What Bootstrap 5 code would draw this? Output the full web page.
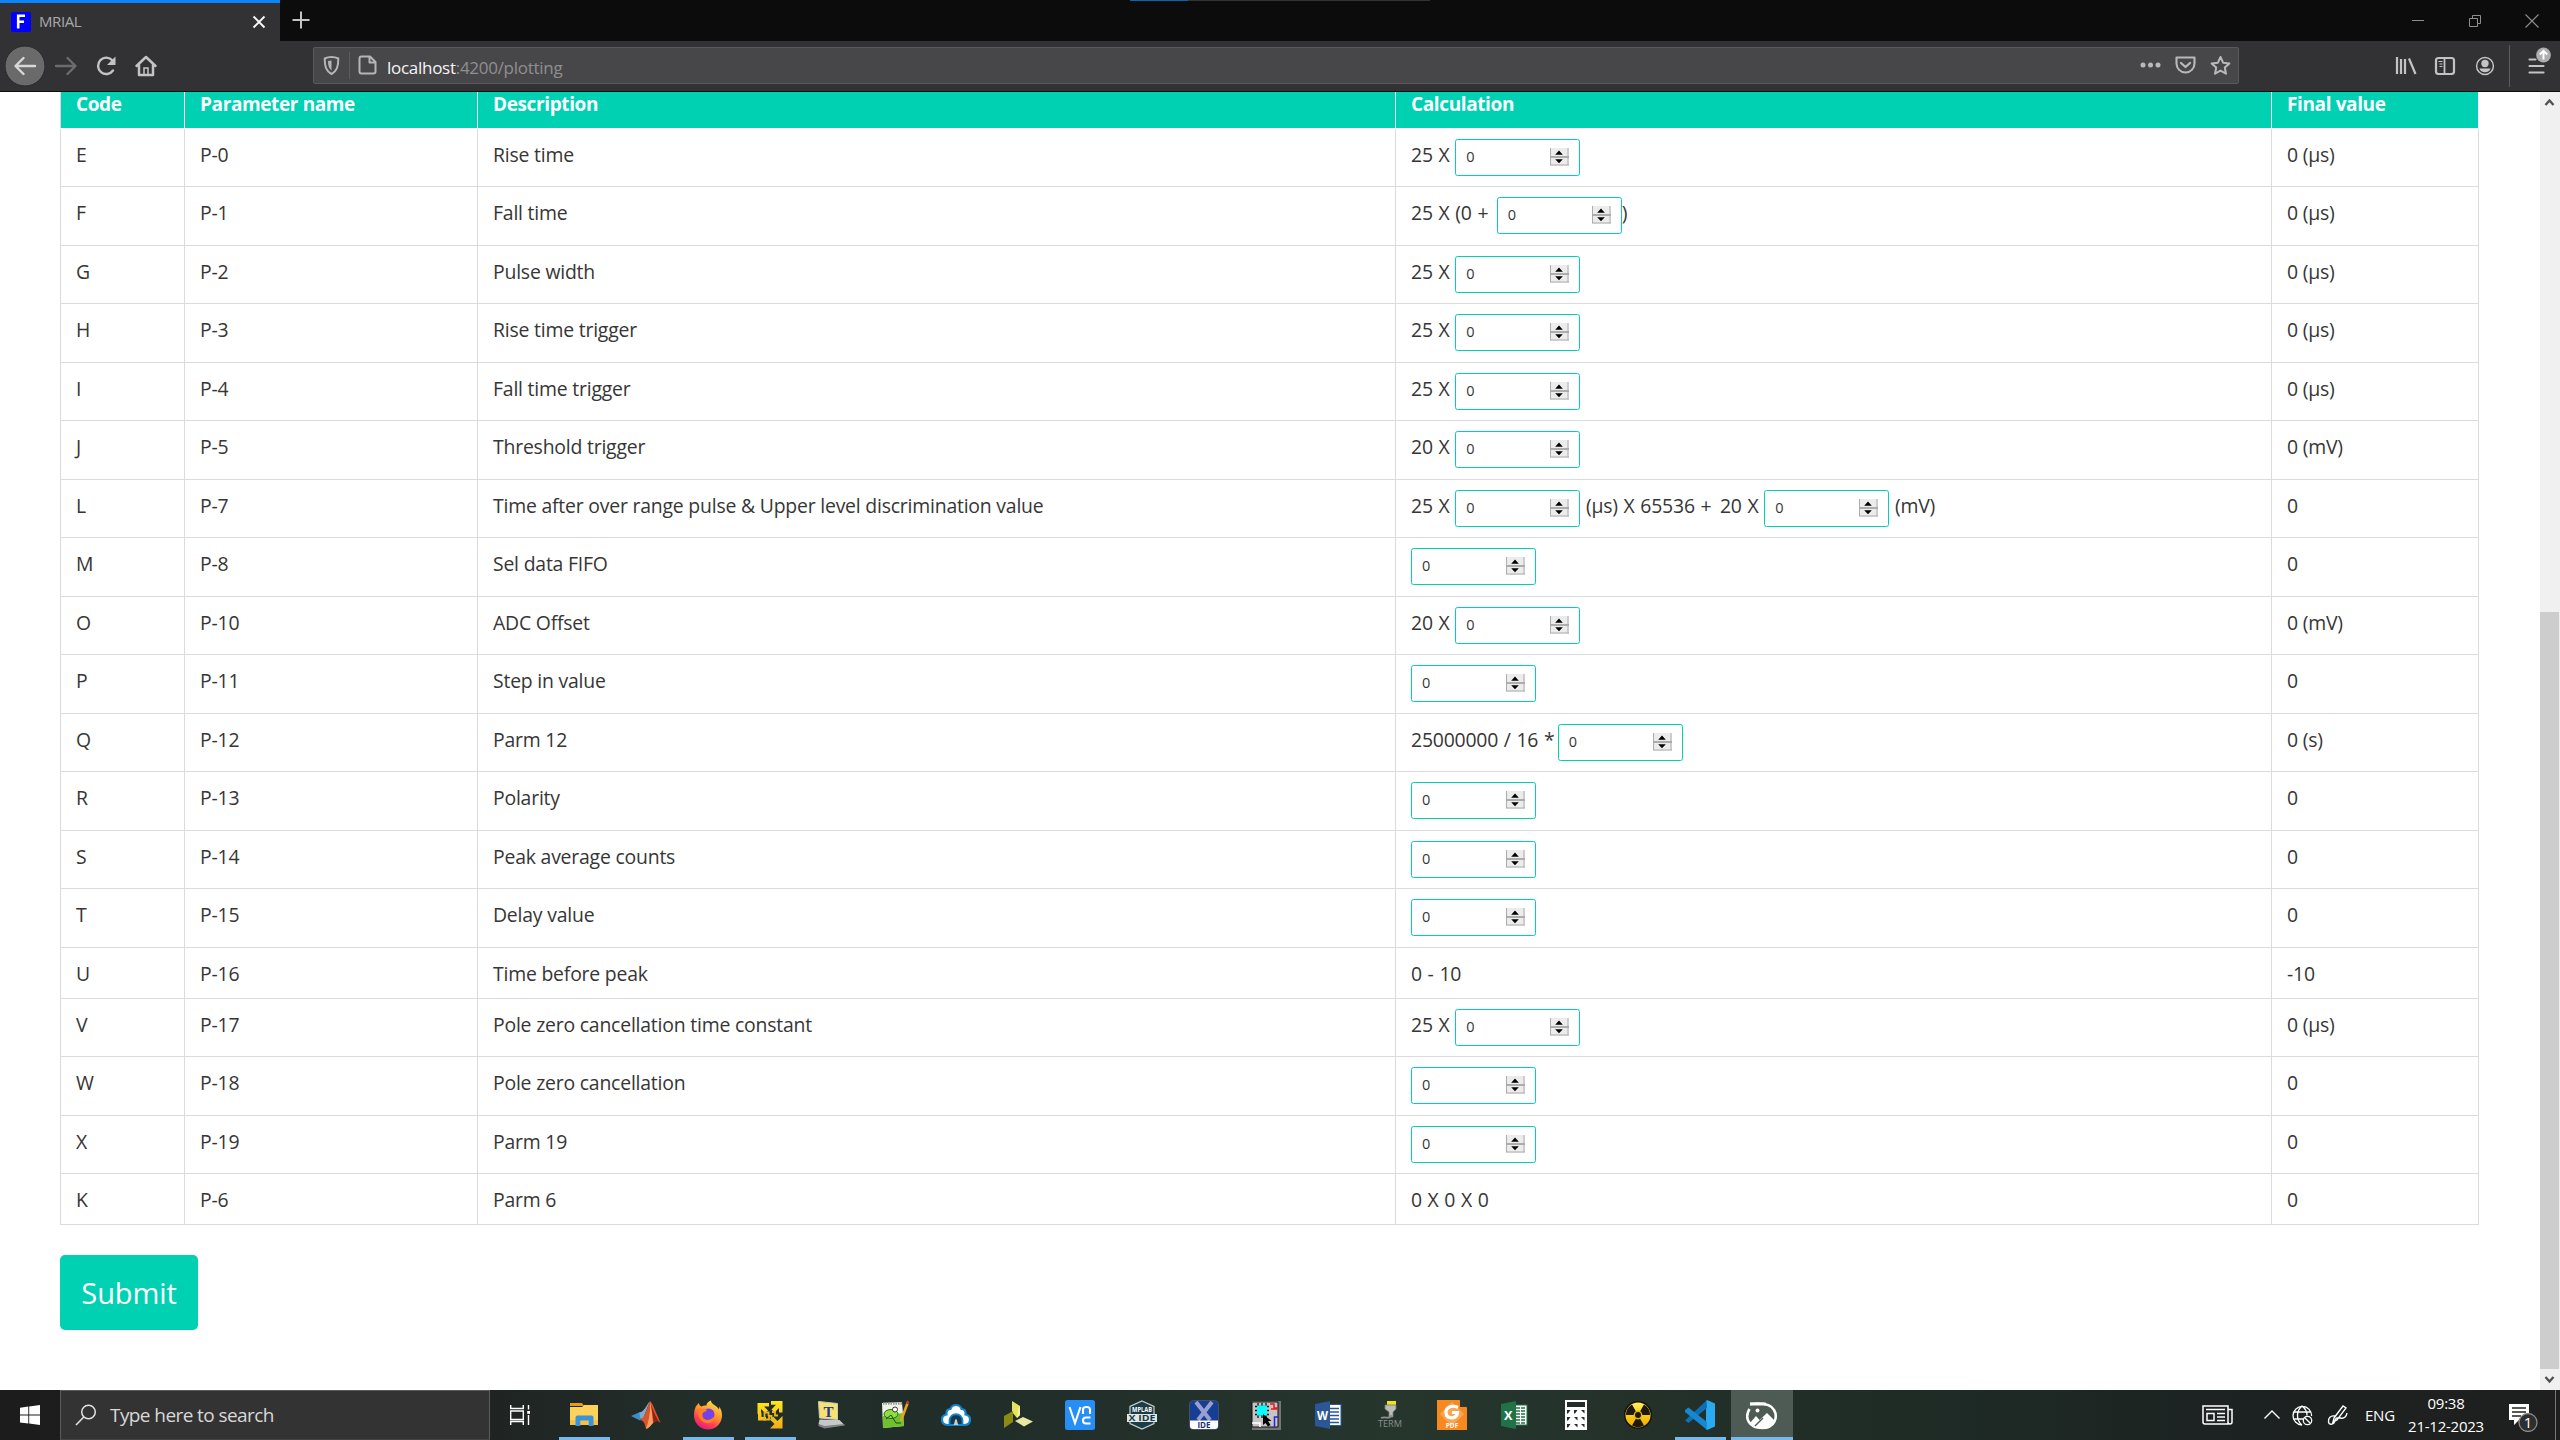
<!DOCTYPE html>
<html lang="en">
<head>
<meta charset="utf-8">
<title>MRIAL</title>
<link href="https://cdn.jsdelivr.net/npm/bootstrap@5.3.0/dist/css/bootstrap.min.css" rel="stylesheet">
<script src="https://cdn.jsdelivr.net/npm/bootstrap@5.3.0/dist/js/bootstrap.bundle.min.js"></script>
<style>
html,body{height:100%;overflow:hidden}
body{font-family:"Open Sans","Noto Sans",sans-serif;color:#363636;background:#fff}
svg{display:block;flex:none}
.screen{width:2560px;height:1440px}
/* browser chrome */
.tabstrip{height:41px;background:#0c0c0c;flex:none}
.top-tick{left:1130px;top:0;width:300px;height:1px;background:#333}
.top-tick i{display:block;width:58px;height:1px;background:#0a62b5}
.tab-active{width:280px;border-top:3px solid #0a84ff;background:#323234;padding:0 10px 1px 11px;color:#a9a9ac;font-size:15px}
.tab-active .tab-title{letter-spacing:-.4px;margin-left:8px}
.win-btn{width:57px}
.toolbar-row{height:51px;background:#323234;border-bottom:1px solid #0c0c0d;flex:none}
.nav-left{width:313px;padding-left:5px}
.nav-left>span{width:40.3px}
.urlbar{width:1926px;height:37px;margin-top:-1px;background:#474749;border:1px solid #5a5a5c;border-radius:2px;font-size:17px;color:#8f8f91;letter-spacing:-.28px}
.urlbar b{font-weight:400;color:#f5f5f6}
.vr-line{width:1px;background:#5c5c5e}
/* page */
.page-view{height:1298px;flex:none;overflow:hidden}
.page-body{width:2540px;padding:0 0 0 60px}
.grid-table{width:2419px;table-layout:fixed;border-collapse:collapse;font-size:19.4px;line-height:30px;letter-spacing:-.2px;color:#363636}
.grid-table th{height:36px;background:#00d1b2;color:#fff;font-weight:700;font-size:19px;letter-spacing:-.38px;padding:0 0 8px 15px;border:1px solid #fff;border-top:0;line-height:25px;vertical-align:top}
.grid-table th:first-child{border-left-color:#dbdbdb}
.grid-table td{padding:11px 0 0 15px;border:1px solid #dbdbdb;vertical-align:top;white-space:nowrap}
.grid-table td:nth-child(4){word-spacing:.9px}
.grid-table .sym-plus{letter-spacing:2.600px}
.grid-table .sym-star{letter-spacing:-2.800px}
.grid-table tbody tr{height:59px}
.grid-table tbody tr.h58{height:58px}
.grid-table tbody tr.h51{height:51px}
.num-field{display:inline-flex;vertical-align:top;width:125px;height:37.5px;margin-top:-1px;border:1px solid #00d1b2;border-radius:2.5px;padding:0 11px 0 10px;align-items:center;background:#fff}
.num-field input{border:0;padding:0;width:84px;font-size:14.5px;line-height:20px;color:#363636;background:none;outline:0;flex:none}
.num-field svg{margin-left:auto;margin-top:-1px}
.btn-submit{width:138px;height:75px;margin-top:30px;background:#00d1b2;color:#fff;font-size:29px;letter-spacing:-.1px;border:0;border-radius:5px;padding:2px 0 0 0}
.scroll-track{width:20px;background:#f0f0f0}
.scroll-thumb{width:19px;height:757px;background:#cdcdcd}
/* taskbar */
.task-bar{height:50px;background:linear-gradient(90deg,#1b1c1b 0,#1f2422 490px,#222e29 700px,#212d29 1000px,#26362d 1400px,#222f28 1750px,#1f2c26 1900px,#1c2322 2200px,#1e1f1e 2560px);color:#fff}
.start-btn{width:60px}
.search-box{width:430px;background:#333;border:1px solid #5b5b5b;border-bottom-color:#444;font-size:19px;letter-spacing:-.58px;color:#d8d8d8;padding-left:14px}
.search-box span{margin-left:13px}
.task-item{width:62px;position:relative}
.task-item.opened::after{content:"";position:absolute;left:6px;right:5px;bottom:0;height:3px;background:#76b9ed}
.task-item.focused{background:#4e5a54}
.task-item.focused::after{left:0;right:0}
.tray{font-size:15px;letter-spacing:-.25px;line-height:23px}
</style>
</head>
<body>
<svg width="0" height="0" class="position-absolute"><defs>
<symbol id="spin" viewBox="0 0 19 18"><rect width="19" height="18" fill="#ececec"/><path d="M.5 0v17M18 0v17M0 9h19M0 17h19" stroke="#adadad" fill="none"/><path d="M0 9h19" stroke="#a5a5a5" stroke-width="1.6"/><path d="M5.200 6.800h7.600L9 2.600zM5.200 11.200h7.600L9 15.200z" fill="#000"/></symbol>
</defs></svg>
<div class="screen d-flex flex-column">
  <div class="tabstrip d-flex position-relative">
    <div class="tab-active d-flex align-items-center">
      <svg width="20" height="20"><rect width="20" height="20" rx="2" fill="#00f"/><path d="M7.200 16.500V3.700H14M7.200 9.800h5.800" stroke="#fff" stroke-width="2.600" fill="none"/></svg>
      <span class="tab-title">MRIAL</span>
      <svg class="ms-auto me-1" width="14" height="14"><path d="M1.500 1.500l11 11M12.500 1.500l-11 11" stroke="#f9f9fa" stroke-width="1.900"/></svg>
    </div>
    <svg class="ms-2 mt-1" width="26" height="32"><path d="M13 7.500v17M4.500 16h17" stroke="#c3c3c4" stroke-width="2"/></svg>
    <div class="position-absolute top-tick"><i></i></div>
    <div class="ms-auto d-flex align-items-center">
      <span class="win-btn d-flex justify-content-center"><svg width="14" height="14"><path d="M1 6.500h12" stroke="#8e8e8e"/></svg></span>
      <span class="win-btn d-flex justify-content-center"><svg width="14" height="14"><path d="M1.500 4.500h8v8h-8zM4.500 4V1.500h8v8H10" stroke="#8e8e8e" fill="none"/></svg></span>
      <span class="win-btn d-flex justify-content-center"><svg width="14" height="14"><path d="M.5.5l13 13M13.500.5l-13 13" stroke="#8e8e8e" stroke-width="1.100"/></svg></span>
    </div>
  </div>

  <div class="toolbar-row d-flex align-items-center">
    <div class="nav-left d-flex align-items-center">
      <span><svg width="40" height="42"><circle cx="20" cy="21" r="20" fill="#6a6a6b" stroke="#29292b"/><path d="M30 21H11M18.500 13l-8 8 8 8" stroke="#d8d8d9" stroke-width="2.400" fill="none" stroke-linecap="round" stroke-linejoin="round"/></svg></span>
      <span><svg width="40" height="42"><path d="M11 21h19M22.500 13l8 8-8 8" stroke="#6c6c6e" stroke-width="2.400" fill="none" stroke-linecap="round" stroke-linejoin="round"/></svg></span>
      <span><svg width="40" height="42"><path d="M27 25.500A8.200 8.200 0 1 1 26.500 15.500" stroke="#c3c3c4" stroke-width="2.400" fill="none" stroke-linecap="round"/><path d="M29.500 11.500v8.500H21z" fill="#c3c3c4"/></svg></span>
      <span><svg width="40" height="42"><path d="M10.500 21L20 12l9.500 9M13 20v10h14V20" stroke="#c3c3c4" stroke-width="2.500" fill="none" stroke-linecap="round" stroke-linejoin="round"/><path d="M18 30v-7h4v7" fill="none" stroke="#c3c3c4" stroke-width="1.500"/></svg></span>
    </div>
    <div class="urlbar d-flex align-items-center">
      <svg width="35" height="35"><path d="M17.500 9c2.500 0 5 .6 6.800 1.500 0 8-1.300 12.500-6.800 15.500-5.500-3-6.800-7.500-6.800-15.500C12.500 9.600 15 9 17.500 9z" stroke="#b5b5b6" stroke-width="2" fill="none" stroke-linejoin="round"/><path d="M17.500 12.500v10c-2.600-2-3.500-5-3.500-9.500 1-.3 2.200-.5 3.500-.5z" fill="#b5b5b6"/></svg>
      <span class="vr-line align-self-stretch my-1"></span>
      <svg width="37" height="35"><path d="M11.500 8.500h8.500l5.500 5.500v9.500a2 2 0 0 1-2 2h-12a2 2 0 0 1-2-2v-13a2 2 0 0 1 2-2zM19.500 9v5.500H25" stroke="#b5b5b6" stroke-width="2" fill="none" stroke-linejoin="round"/></svg>
      <span class="pt-1 ps-0"><b>localhost</b>:4200/plotting</span>
      <div class="ms-auto d-flex">
        <svg width="35" height="35"><g fill="#b9b9ba"><circle cx="10" cy="17" r="2.500"/><circle cx="17.500" cy="17" r="2.500"/><circle cx="25" cy="17" r="2.500"/></g></svg>
        <svg width="35" height="35"><path d="M8.500 9.500h18v6c0 5-4 9-9 9s-9-4-9-9z" stroke="#b9b9ba" stroke-width="2.100" fill="none" stroke-linejoin="round"/><path d="M13 15l4.500 4 4.500-4" stroke="#b9b9ba" stroke-width="2.300" fill="none" stroke-linecap="round" stroke-linejoin="round"/></svg>
        <svg width="35" height="35"><path d="M17.500 9l2.600 5.700 6.300.7-4.600 4.200 1.200 6.100-5.500-3.100-5.500 3.100 1.200-6.100-4.600-4.200 6.300-.7z" stroke="#b9b9ba" stroke-width="2" fill="none" stroke-linejoin="round"/></svg>
      </div>
    </div>
    <div class="d-flex align-items-center ms-auto">
      <svg width="40" height="42"><path d="M12 12v17M16 14v15M20 14v15M24 13.500l6.500 15.500" stroke="#c3c3c4" stroke-width="2.200"/></svg>
      <svg width="40" height="42"><rect x="11" y="13" width="18" height="16" rx="2.500" stroke="#c3c3c4" stroke-width="2.200" fill="none"/><path d="M19.500 13v16" stroke="#c3c3c4" stroke-width="1.800"/><path d="M13.500 16.500h4M14.500 19h3M14.500 21.500h3" stroke="#c3c3c4" stroke-width="1.200"/></svg>
      <svg width="44" height="42"><circle cx="20" cy="21" r="8.400" stroke="#c3c3c4" stroke-width="1.500" fill="none"/><circle cx="20" cy="18.500" r="3.700" fill="#c3c3c4"/><path d="M14.500 23.500h11c-.6 2.600-2.800 3.800-5.500 3.800s-4.900-1.200-5.500-3.800z" fill="#c3c3c4"/></svg>
      <span class="vr-line" style="height:42px"></span>
      <svg width="50" height="48"><path d="M19.500 17.500h6M19.500 24h14M19.500 30.500h14" stroke="#c3c3c4" stroke-width="2.200" stroke-linecap="round"/><circle cx="33.500" cy="13" r="7.400" fill="#aeaeb0"/><path d="M33.500 17.500V9M29.800 12.500l3.700-3.700 3.700 3.700" stroke="#fff" stroke-width="1.900" fill="none"/></svg>
    </div>
  </div>

  <div class="page-view d-flex">
    <main class="page-body">
      <table class="grid-table">
        <colgroup><col style="width:124px"><col style="width:293px"><col style="width:918px"><col style="width:876px"><col style="width:207px"></colgroup>
        <thead><tr><th>Code</th><th>Parameter name</th><th>Description</th><th>Calculation</th><th>Final value</th></tr></thead>
        <tbody>
        <tr class="h58"><td>E</td><td>P-0</td><td>Rise time</td><td>25 X <span class="num-field"><input value="0"><svg width="19" height="18"><use href="#spin"/></svg></span></td><td>0 (µs)</td></tr>
        <tr><td>F</td><td>P-1</td><td>Fall time</td><td>25 X (0 <span class="sym-plus">+</span> <span class="num-field"><input value="0"><svg width="19" height="18"><use href="#spin"/></svg></span>)</td><td>0 (µs)</td></tr>
        <tr class="h58"><td>G</td><td>P-2</td><td>Pulse width</td><td>25 X <span class="num-field"><input value="0"><svg width="19" height="18"><use href="#spin"/></svg></span></td><td>0 (µs)</td></tr>
        <tr><td>H</td><td>P-3</td><td>Rise time trigger</td><td>25 X <span class="num-field"><input value="0"><svg width="19" height="18"><use href="#spin"/></svg></span></td><td>0 (µs)</td></tr>
        <tr class="h58"><td>I</td><td>P-4</td><td>Fall time trigger</td><td>25 X <span class="num-field"><input value="0"><svg width="19" height="18"><use href="#spin"/></svg></span></td><td>0 (µs)</td></tr>
        <tr><td>J</td><td>P-5</td><td>Threshold trigger</td><td>20 X <span class="num-field"><input value="0"><svg width="19" height="18"><use href="#spin"/></svg></span></td><td>0 (mV)</td></tr>
        <tr class="h58"><td>L</td><td>P-7</td><td>Time after over range pulse &amp; Upper level discrimination value</td><td>25 X <span class="num-field"><input value="0"><svg width="19" height="18"><use href="#spin"/></svg></span> (µs) X 65536 <span class="sym-plus">+</span> 20 X <span class="num-field"><input value="0"><svg width="19" height="18"><use href="#spin"/></svg></span> (mV)</td><td>0</td></tr>
        <tr><td>M</td><td>P-8</td><td>Sel data FIFO</td><td><span class="num-field"><input value="0"><svg width="19" height="18"><use href="#spin"/></svg></span></td><td>0</td></tr>
        <tr class="h58"><td>O</td><td>P-10</td><td>ADC Offset</td><td>20 X <span class="num-field"><input value="0"><svg width="19" height="18"><use href="#spin"/></svg></span></td><td>0 (mV)</td></tr>
        <tr><td>P</td><td>P-11</td><td>Step in value</td><td><span class="num-field"><input value="0"><svg width="19" height="18"><use href="#spin"/></svg></span></td><td>0</td></tr>
        <tr class="h58"><td>Q</td><td>P-12</td><td>Parm 12</td><td>25000000 / 16 <span class="sym-star">*</span> <span class="num-field"><input value="0"><svg width="19" height="18"><use href="#spin"/></svg></span></td><td>0 (s)</td></tr>
        <tr><td>R</td><td>P-13</td><td>Polarity</td><td><span class="num-field"><input value="0"><svg width="19" height="18"><use href="#spin"/></svg></span></td><td>0</td></tr>
        <tr class="h58"><td>S</td><td>P-14</td><td>Peak average counts</td><td><span class="num-field"><input value="0"><svg width="19" height="18"><use href="#spin"/></svg></span></td><td>0</td></tr>
        <tr><td>T</td><td>P-15</td><td>Delay value</td><td><span class="num-field"><input value="0"><svg width="19" height="18"><use href="#spin"/></svg></span></td><td>0</td></tr>
        <tr class="h51"><td>U</td><td>P-16</td><td>Time before peak</td><td>0 - 10</td><td>-10</td></tr>
        <tr class="h58"><td>V</td><td>P-17</td><td>Pole zero cancellation time constant</td><td>25 X <span class="num-field"><input value="0"><svg width="19" height="18"><use href="#spin"/></svg></span></td><td>0 (µs)</td></tr>
        <tr><td>W</td><td>P-18</td><td>Pole zero cancellation</td><td><span class="num-field"><input value="0"><svg width="19" height="18"><use href="#spin"/></svg></span></td><td>0</td></tr>
        <tr class="h58"><td>X</td><td>P-19</td><td>Parm 19</td><td><span class="num-field"><input value="0"><svg width="19" height="18"><use href="#spin"/></svg></span></td><td>0</td></tr>
        <tr class="h51"><td>K</td><td>P-6</td><td>Parm 6</td><td>0 X 0 X 0</td><td>0</td></tr>
        </tbody>
      </table>
      <button class="btn btn-submit" type="button">Submit</button>
    </main>
    <div class="scroll-track d-flex flex-column">
      <svg width="20" height="20"><path d="M5.500 13l4-4.500 4 4.500" stroke="#505050" stroke-width="2.300" fill="none"/></svg>
      <div class="scroll-thumb mt-auto"></div>
      <svg width="20" height="21"><path d="M5.500 8l4 4.500 4-4.500" stroke="#505050" stroke-width="2.300" fill="none"/></svg>
    </div>
  </div>

  <div class="task-bar d-flex">
    <div class="start-btn d-flex align-items-center justify-content-center"><svg width="20" height="20"><path d="M0 2.800L8.300 1.600v8H0zM9.200 1.500L20 0v9.600H9.200zM0 10.500h8.300v8L0 17.400zM9.200 10.500H20V20L9.200 18.600z" fill="#fff"/></svg></div>
    <div class="search-box d-flex align-items-center"><svg width="22" height="22"><circle cx="13.500" cy="8" r="6.800" stroke="#e2e2e2" stroke-width="1.500" fill="none"/><path d="M8.800 13L1 21" stroke="#e2e2e2" stroke-width="1.600"/></svg><span>Type here to search</span></div>
    <div class="start-btn d-flex align-items-center justify-content-center"><svg width="20" height="20"><path d="M.7 0v3.500h12.600V0M.7 20v-3.500h12.600V20M.7 6h12.600v8.500H.7zM18.500 0v4.500M18.500 10v10" stroke="#fff" stroke-width="1.400" fill="none"/><rect x="17.200" y="6" width="2.800" height="2.800" fill="#fff"/></svg></div>
    <div class="d-flex ms-1 ps-0">
      <div class="task-item opened d-flex align-items-center justify-content-center" style="margin-left:-1px"><svg width="30" height="30"><path d="M1 3h12l2 3h-14z" fill="#e2a10b"/><path d="M1 7h12l2-2h14v20H1z" fill="#fed159"/><path d="M1 20h28v5H1z" fill="#f6c146"/><path d="M6.500 26V17.500a2 2 0 0 1 2-2h14a2 2 0 0 1 2 2V26h-4.800v-5.500h-8.400V26z" fill="#3a93d8"/></svg></div>
      <div class="task-item d-flex align-items-center justify-content-center"><svg width="30" height="30"><path d="M0 16l9-4 5 4-5 4.500z" fill="#3e8dc4"/><path d="M8.500 12.500c5-1 6-6 10.500-11.500L12 19l-3-1.500z" fill="#79aed0"/><path d="M19 1c4 4 6 13 11 22-3-3-6-2-8 0s-4 5-7 6c-1-5-2-8-5.500-9C14 17 16 8 19 1z" fill="#d9532c"/><path d="M19 1c1 8-1 20-4 28 3-1 5-4 7-6-1-7-1-14-3-22z" fill="#f4a261"/><path d="M20 5c3 7 5 13 9 18-3-2-5-2-6.500-1C22 16 21 10 20 5z" fill="#8e2118"/></svg></div>
      <div class="task-item opened d-flex align-items-center justify-content-center"><svg width="30" height="30"><defs><linearGradient id="fx" x1=".8" y1="0" x2=".3" y2="1"><stop offset="0" stop-color="#ffe94a"/><stop offset=".45" stop-color="#ff9330"/><stop offset=".75" stop-color="#ff3f4e"/><stop offset="1" stop-color="#e4158b"/></linearGradient></defs><path d="M4 5c1-1 1.500-2 2-2 0 2 1 3 2.500 3.500 1.500-1 3-1.200 5-1C13.500 3 16 1 18 .5c0 4 5 4 8 9 .3-1 .2-2 0-3 2.500 3 3 6 3 9a14 14 0 0 1-28 0C1 11 2 7 4 5z" fill="url(#fx)"/><circle cx="15.500" cy="14.500" r="6" fill="#7542e5"/><path d="M6 9c3-1 6 0 8 1-1 2-4 2-5 4s1 6 5 6c5 0 5-3 8-3-1 5-5 7-9 6-6-1-9-8-7-14z" fill="#ff8025"/></svg></div>
      <div class="task-item opened d-flex align-items-center justify-content-center"><svg width="30" height="30"><defs><linearGradient id="vm" x1="0" y1="0" x2="0" y2="1"><stop offset="0" stop-color="#ffe81c"/><stop offset="1" stop-color="#f3ad1c"/></linearGradient></defs><path d="M2.500 3H14v3.500H9l4 4-2.800 2.500L6 9v5H2.500zM16 1h11.500v11.500H24V8l-4.500 4.500-3-3L21 4.700h-5zM27.500 16v12.500H15L19.500 24 15 19.500l3-3 4.500 4.500zM3 12.500h3.500V17H11v3.500H3z" fill="url(#vm)"/><path d="M9.500 11v8.500H14V16h2.500v3.500H20M10 12.500h3.500V16M17 12h3v3.500h3" stroke="#e8b91b" stroke-width="1.800" fill="none"/></svg></div>
      <div class="task-item d-flex align-items-center justify-content-center"><svg width="30" height="30"><g transform="translate(-1.500 0)"><path d="M3 1.500l19 2v16L4 18z" fill="#f5e36c" stroke="#c8c8c0"/><path d="M4 19.500l20 .5 5 5-20 3-6-4z" fill="#c5c8ca"/><path d="M3 24l6 2 20-2v1.500L9 28.500 3 26z" fill="#7c8082"/><text x="8" y="17" font-family="Liberation Serif" font-size="15" font-weight="700" fill="#2532a2">T</text></g></svg></div>
      <div class="task-item d-flex align-items-center justify-content-center"><svg width="30" height="30"><path d="M3 3l20-1 2 24-21 2z" fill="#eef3e4"/><path d="M4 16l20-3 1 13-21 2z" fill="#6fc22d"/><path d="M4 3.500h19" stroke="#999" stroke-width="2.500" stroke-dasharray="1.500 1"/><ellipse cx="12" cy="14" rx="7" ry="4.500" fill="#8fdd3e" stroke="#31691d" stroke-width="1"/><circle cx="16" cy="9.500" r="2.500" fill="#fff" stroke="#333"/><path d="M7 19l5-4 5 8h5" stroke="#1d4b1b" fill="none"/><path d="M29 2l-6 16-1 3" stroke="#e7a225" stroke-width="2.600"/><path d="M29.500 1l-1 3" stroke="#b23a2a" stroke-width="3"/></svg></div>
      <div class="task-item d-flex align-items-center justify-content-center"><svg width="30" height="30"><path d="M6.500 25C2.500 25 1 22.500 1 19.500S3 15 5.500 14.500C5 10.500 7 9 9.500 9c1-3 3-4 5.500-4s4.500 1 5.500 4c2.500 0 4.500 1.500 4 5.500C27 15 29 16.500 29 19.500S27.500 25 23.500 25z" fill="#fff" stroke="#1287cf" stroke-width="2.200"/><path d="M8.500 25v-4c0-9 13-9 13 0v4z" fill="#16384c" stroke="#1287cf" stroke-width="1.800"/><path d="M12.500 25c1-1 1.300-6 2.500-6s1.500 5 2.500 6z" fill="#ccc"/></svg></div>
      <div class="task-item d-flex align-items-center justify-content-center"><svg width="30" height="30"><path d="M9 1l8 5v9l-3 3-5-6z" fill="#e3e35e"/><path d="M17 6v9l-3 3 1-9z" fill="#f1f1a2"/><path d="M1 16l9-5v11l-9 6z" fill="#8b8b13"/><path d="M12 21l8-4 10 4.500-9 5z" fill="#e8e8a0"/></svg></div>
      <div class="task-item d-flex align-items-center justify-content-center"><svg width="30" height="30"><rect width="30" height="30" rx="2.500" fill="#268ef5"/><path d="M4.500 7l5.500 16L15.500 7M18 14V9.500q0-2.500 3.500-2.500t3.500 2.500V14M25.500 17.500H21q-3 0-3 3t3 3h4.500" stroke="#fff" stroke-width="2.100" fill="none"/></svg></div>
      <div class="task-item d-flex align-items-center justify-content-center"><svg width="30" height="30"><path d="M15 1l12 5.500v17L15 29 3 23.500v-17z" fill="#1c3c46" stroke="#c2d2d4" stroke-width="1.200"/><rect x="0" y="14" width="30" height="8" fill="#dfe8e9"/><text x="15" y="12" font-size="6.800" font-weight="700" text-anchor="middle" fill="#fff" textLength="20" lengthAdjust="spacingAndGlyphs">MPLAB</text><text x="15" y="21" font-size="8" font-weight="700" text-anchor="middle" fill="#1c3c46" textLength="27" lengthAdjust="spacingAndGlyphs">X IDE</text></svg></div>
      <div class="task-item d-flex align-items-center justify-content-center"><svg width="30" height="30"><rect x=".5" y=".5" width="29" height="29" rx="4" fill="#163f94" stroke="#44506c"/><path d="M7 2l14 18M23 2L9 20" stroke="#9a9fd2" stroke-width="4"/><path d="M1 20.500h28V26a3 3 0 0 1-3 3H4a3 3 0 0 1-3-3z" fill="#fff"/><text x="15" y="27.600" font-size="8" font-weight="700" text-anchor="middle" fill="#1b2f6e">IDE</text></svg></div>
      <div class="task-item d-flex align-items-center justify-content-center"><svg width="30" height="30"><path d="M1 1h29v29H1z" fill="#757575"/><path d="M1 2h26v25H1z" fill="#c5c5c5" stroke="#111"/><path d="M4 6.500h14M4 10.500h14M4 14.500h14M7 3v15M11 3v15M15 3v15" stroke="#111" stroke-width="1.300"/><rect x="6" y="5.500" width="10" height="10" fill="#0ff"/><path d="M19 4h4v4h4M20 9h6" stroke="#f01818" stroke-width="1.500" fill="none"/><path d="M23.500 27V17H27" stroke="#2020f0" stroke-width="1.500" fill="none"/><path d="M1 23h8v4" stroke="#fff" stroke-width="1.500" fill="none"/><path d="M12 14v11l2.500-2 2.500 3.500 2.500-1.500-2.500-4h3.500z" fill="#000"/></svg></div>
      <div class="task-item d-flex align-items-center justify-content-center"><svg width="30" height="30"><rect x="14" y="4.500" width="14" height="21" fill="#fff" stroke="#2b5796"/><path d="M17 8.500h9M17 12h9M17 15.500h9M17 19h9M17 22.500h9" stroke="#2b5796" stroke-width="1.300"/><path d="M2 4l15-3v28L2 26z" fill="#2b5796"/><text x="4" y="19.500" font-size="12" font-weight="700" fill="#fff" textLength="11" lengthAdjust="spacingAndGlyphs">W</text></svg></div>
      <div class="task-item d-flex align-items-center justify-content-center"><svg width="30" height="30"><rect x="12" y="1" width="9" height="4" fill="#f0e50e"/><path d="M10 5h11v4l-3 3v5h-4v-5l-4-3z" fill="#b9bdb8" stroke="#777" stroke-width=".8"/><path d="M16 15c0 5-6 1-10 3" stroke="#8c918e" stroke-width="1.800" fill="none"/><text x="3" y="27" font-size="9" fill="#8a908c" textLength="24" lengthAdjust="spacingAndGlyphs">TERM</text></svg></div>
      <div class="task-item d-flex align-items-center justify-content-center"><svg width="30" height="30"><path d="M0 0h22.500L30 7.500V30H0z" fill="#f68a20"/><path d="M23 0l7 7h-7z" fill="#27372f"/><path d="M15 2l12 12-12 12L3 14z" fill="#f9a552"/><path d="M21 7.500c-6-3-12.500 0-12 5.500s8 6.500 11 2l.5-2.500H15" stroke="#fff" stroke-width="3.200" fill="none"/><text x="15" y="27.500" font-size="6.500" font-weight="700" text-anchor="middle" fill="#fff">PDF</text></svg></div>
      <div class="task-item d-flex align-items-center justify-content-center"><svg width="30" height="30"><rect x="14" y="5" width="14" height="20" fill="#fff" stroke="#207346"/><path d="M17 8h9M17 11h9M17 14h9M17 17h9M17 20h9M17 23h9" stroke="#207346" stroke-width="1.500"/><path d="M21.500 6v18" stroke="#fff"/><path d="M2 4l15-3v28L2 26z" fill="#207346"/><text x="5" y="20" font-size="13" font-weight="700" fill="#fff" textLength="8.500" lengthAdjust="spacingAndGlyphs">X</text></svg></div>
      <div class="task-item d-flex align-items-center justify-content-center"><svg width="30" height="30"><rect x="4" width="22" height="30" fill="#fff"/><path d="M6 2h18v5H6z" fill="#222f28"/><path d="M6 10h3.500L7 13.500H6zM13 10h3.500L14 13.500h-1zM20 10h3.500v3.500zM6 17h3.500L7 20.500H6zM13 17h3.500v3.500zM20 17h3.500v3.500zM6 24h3.500L7 27.500H6zM13 24h3.500v3.500zM20 24h3.500v3.500z" fill="#222f28"/></svg></div>
      <div class="task-item d-flex align-items-center justify-content-center"><svg width="30" height="30"><defs><linearGradient id="rad" x1="0" y1="0" x2="0" y2="1"><stop offset="0" stop-color="#fff066"/><stop offset=".5" stop-color="#f8cd12"/><stop offset="1" stop-color="#f0a40a"/></linearGradient></defs><circle cx="15" cy="15" r="13.300" fill="url(#rad)" stroke="#15130a" stroke-width="1.500"/><g fill="#1c1a10"><path d="M15 15L9 4.600A12 12 0 0 0 3 15z"/><path d="M15 15h12A12 12 0 0 0 21 4.600z"/><path d="M15 15l-6 10.400a12 12 0 0 0 12 0z"/></g><circle cx="15" cy="15" r="4.400" fill="#f0b50c"/><circle cx="15" cy="15" r="3" fill="#1c1a10"/></svg></div>
      <div class="task-item opened d-flex align-items-center justify-content-center"><svg width="30" height="30"><path d="M22 0l8 3.500v23L22 30l-1-1V1z" fill="#2aabf1"/><path d="M0 20.500L21.500.5 22 8 3.500 23z" fill="#0e6fb7"/><path d="M0 10l3.500-2.500L22 22l-.5 7.500L0 12z" fill="#1688d1"/></svg></div>
      <div class="task-item opened focused d-flex align-items-center justify-content-center"><svg width="32" height="30"><path d="M3.500 9C-2 18 3 28 16 28S32 17 28 10C25 4 17 2.500 4 4" stroke="#fff" stroke-width="2.600" fill="none"/><path d="M4 2.500h16v3H4z" fill="#fff"/><path d="M4 23l6-7 3.500 4 7.500-7 8 8c-3 8-17 10-25 2z" fill="#fff"/><path d="M9 26l8-8" stroke="#4e5a54" stroke-width="1.500"/><circle cx="11.500" cy="10.500" r="2" fill="#fff"/></svg></div>
    </div>
    <div class="tray ms-auto d-flex align-items-center">
      <svg width="32" height="20" style="margin-right:29px"><path d="M1 1h25v18H3a2 2 0 0 1-2-2zM26 4.500h4V17a2 2 0 0 1-4 0" stroke="#fff" stroke-width="1.500" fill="none"/><path d="M4 4.500h19M15 8.500h8M15 12h8M15 15.500h8" stroke="#fff" stroke-width="1.300"/><rect x="5" y="8.500" width="7" height="7" stroke="#fff" stroke-width="1.500" fill="none"/></svg>
      <svg width="18" height="12" style="margin-right:11px"><path d="M1.500 9.500L9 2l7.500 7.500" stroke="#fff" stroke-width="1.400" fill="none"/></svg>
      <svg width="21" height="21" style="margin-right:14px"><g stroke="#fff" stroke-width="1.300" fill="none"><path d="M10 20A9.300 9.300 0 1 1 19.600 11M10 20C4 15 4 6 10 1c4 3 5 6 5 9.500M1.500 7h17M1.500 14H11"/><circle cx="15.500" cy="15.500" r="4.200"/><path d="M12.700 12.700l5.600 5.600"/></g></svg>
      <svg width="22" height="22" style="margin-right:16px"><path d="M8 12C3 11 1 15 1.500 18s5 3 6 0 1-5 6-4c4 1 6-2 6.500-5M7 14l9-12 3 2-9 12-4 2z" stroke="#fff" stroke-width="1.400" fill="none"/></svg>
      <span style="width:42px">ENG</span>
      <span class="text-center text-nowrap" style="width:78px;margin-top:-1px">09:38<br>21-12-2023</span>
      <svg width="34" height="34" style="margin-left:23px"><path d="M1 6h20v16H11l-5 5v-5H1z" fill="#fff"/><path d="M4 10h14M4 14h14M4 18h9" stroke="#222" stroke-width="1.300"/><circle cx="20" cy="24.500" r="9" fill="#2c2f2e" stroke="#8a8a8a" stroke-width="1.300"/><text x="20" y="30" font-size="15" fill="#fff" text-anchor="middle">1</text></svg>
      <span style="width:1px;height:50px;background:#777;margin:0 4px 0 13px"></span>
    </div>
  </div>
</div>
</body>
</html>
